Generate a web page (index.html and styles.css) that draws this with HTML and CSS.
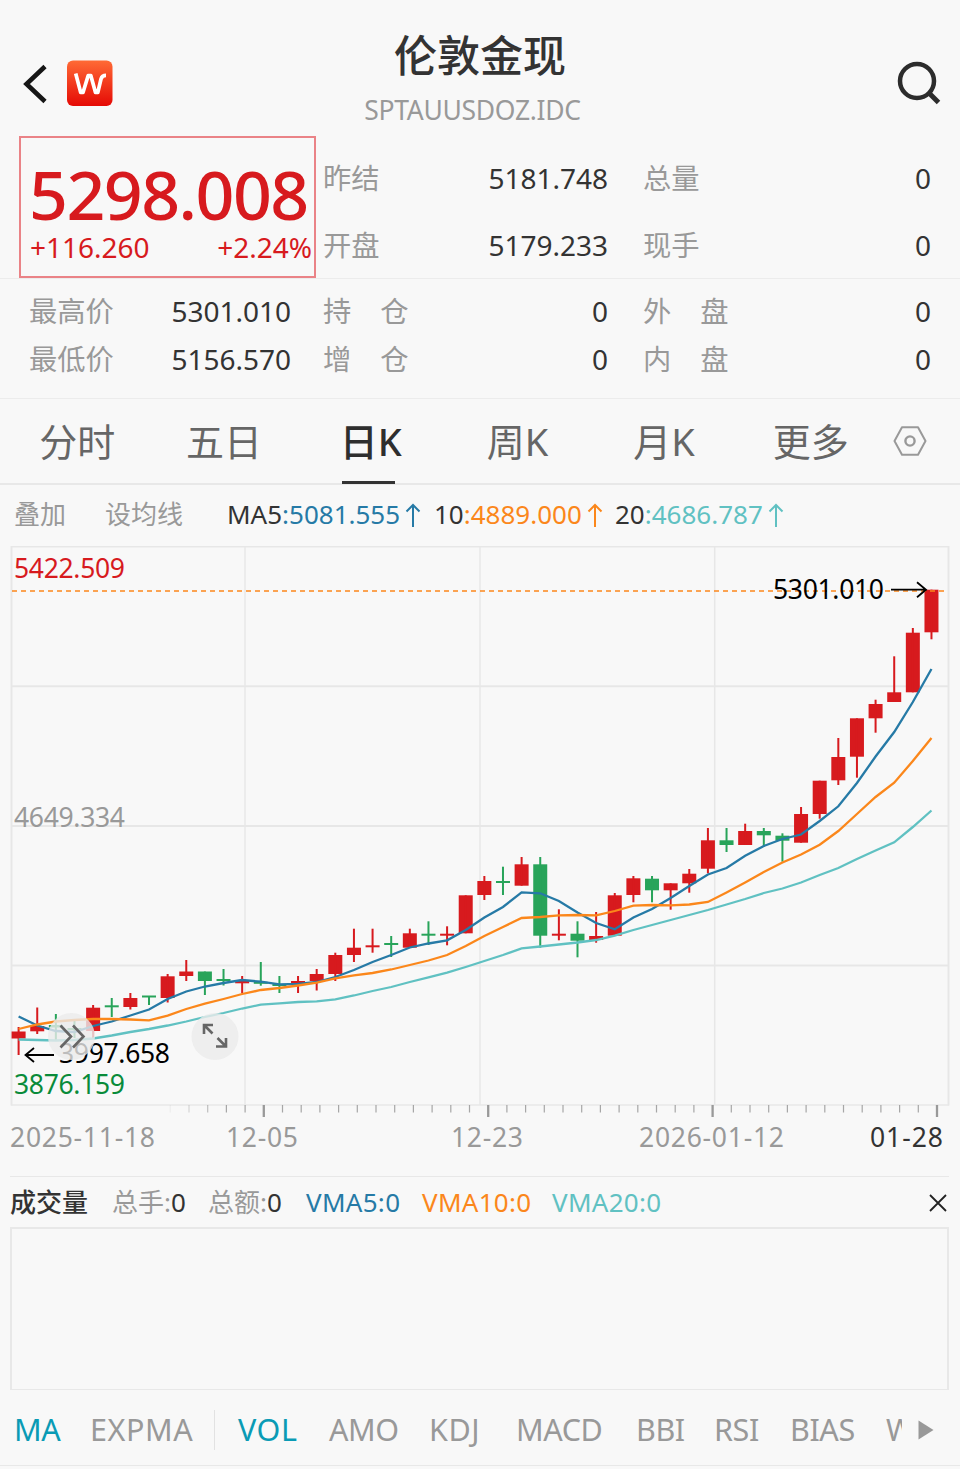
FILE: index.html
```html
<!DOCTYPE html>
<html lang="zh-CN">
<head>
    <meta charset="UTF-8">
    <meta name="viewport" content="width=device-width, initial-scale=1.0">
    <title>伦敦金现</title>
    <link rel="stylesheet" href="styles.css">
</head>
<body>
    <header class="header">
        <div class="header-left">
            <svg class="back" width="26" height="42" viewBox="0 0 26 42"><path d="M23 3.500 4.500 21 23 38.500" fill="none" stroke="#161616" stroke-width="4.600"/></svg>
            <svg class="logo" width="46" height="46" viewBox="0 0 46 46">
                <defs>
                    <linearGradient id="logo-bg" x1="0" y1="0" x2="0" y2="1">
                        <stop offset="0" stop-color="#ff6a35"/>
                        <stop offset="1" stop-color="#e50a05"/>
                    </linearGradient>
                </defs>
                <rect x="0" y="0.500" width="45.500" height="45.500" rx="6" fill="url(#logo-bg)"/>
                <path d="M8.700 13.500 13.700 32.500H16L21.200 15.500H23.800L28.500 32.500H30.800L34 19Q35 15.300 39 15.300" fill="none" stroke="#fff" stroke-width="3.700" stroke-linejoin="round"/>
            </svg>
        </div>
        <div class="header-title">
            <h1>伦敦金现</h1>
            <div class="code">SPTAUUSDOZ.IDC</div>
        </div>
        <svg class="search" width="48" height="48" viewBox="0 0 48 48"><g fill="none" stroke="#2c2c2c"><circle cx="22" cy="22" r="17" stroke-width="4.500"/><path d="M34 34 43.500 43.500" stroke-width="5"/></g></svg>
    </header>

    <section class="quote">
        <div class="price-box">
            <div class="price">5298.008</div>
            <div class="change"><span>+116.260</span><span>+2.24%</span></div>
        </div>
        <div class="quote-grid">
            <span class="label">昨结</span><span class="num">5181.748</span>
            <span class="label">总量</span><span class="num">0</span>
            <span class="label">开盘</span><span class="num">5179.233</span>
            <span class="label">现手</span><span class="num">0</span>
        </div>
    </section>

    <section class="details">
        <span class="label">最高价</span><span class="num">5301.010</span>
        <span class="label spaced">持仓</span><span class="num">0</span>
        <span class="label spaced">外盘</span><span class="num">0</span>
        <span class="label">最低价</span><span class="num">5156.570</span>
        <span class="label spaced">增仓</span><span class="num">0</span>
        <span class="label spaced">内盘</span><span class="num">0</span>
    </section>

    <nav class="tabs">
        <a class="tab">分时</a>
        <a class="tab">五日</a>
        <a class="tab active">日K</a>
        <a class="tab">周K</a>
        <a class="tab">月K</a>
        <a class="tab">更多</a>
        <svg class="settings" width="36" height="32" viewBox="0 0 36 32"><g fill="none" stroke="#999" stroke-width="2"><path d="M10 2.200H26L33.500 16 26 29.800H10L2.500 16Z" stroke-linejoin="round"/><circle cx="18" cy="16" r="4.600" stroke-width="2.400"/></g></svg>
    </nav>

    <div class="ma-bar">
        <span class="link overlay">叠加</span>
        <span class="link setting">设均线</span>
        <span class="ma ma5">MA5<b>:5081.555</b><svg width="16" height="24" viewBox="0 0 16 24"><path d="M8 24V2M1.500 8.500 8 2 14.500 8.500"/></svg></span>
        <span class="ma ma10">10<b>:4889.000</b><svg width="16" height="24" viewBox="0 0 16 24"><path d="M8 24V2M1.500 8.500 8 2 14.500 8.500"/></svg></span>
        <span class="ma ma20">20<b>:4686.787</b><svg width="16" height="24" viewBox="0 0 16 24"><path d="M8 24V2M1.500 8.500 8 2 14.500 8.500"/></svg></span>
    </div>

    <svg class="chart" width="960" height="630" viewBox="0 546 960 630">
        <g class="grid-lines">
            <path d="M11 686.200H949M11 826H949M11 965.500H949" stroke-width="2"/>
            <path d="M245 547V1105M480 547V1105M714.700 547V1105" stroke-width="1.500"/>
            <path d="M11.500 546V1105.500M948.500 546V1105.500" stroke-width="2"/>
            <path d="M11 546.700H949M11 1105H949" stroke-width="1.500"/>
        </g>
        <g id="ticks"></g>
        <g id="candles"></g>
        <g id="averages"></g>
        <path class="last-price" d="M12 591H944"/>
        <path class="arrow" d="M891 589.700H926M917 582.200 926 589.700 917 597.200"/>
        <path class="arrow" d="M54 1055H26M34 1048 25.500 1055 34 1062"/>
        <text x="14" y="577.500" textLength="111" class="up">5422.509</text>
        <text x="773" y="599" textLength="111">5301.010</text>
        <text x="14" y="826.500" textLength="111" class="muted">4649.334</text>
        <text x="59" y="1063" textLength="111">3997.658</text>
        <text x="14" y="1094" textLength="111" class="down">3876.159</text>
        <g class="round-button">
            <circle cx="71.500" cy="1036.500" r="23.500"/>
            <path d="M60.500 1025.500 71 1036.500 60.500 1047.500M73 1025.500 83.500 1036.500 73 1047.500"/>
        </g>
        <g class="round-button">
            <circle cx="215" cy="1036.500" r="23.500"/>
            <path d="M204 1034V1025H213M204.500 1025.500 212.500 1033.500M226 1038V1046.500H216M225.500 1046 217.500 1038"/>
        </g>
        <g class="muted">
            <text x="10" y="1146.500" textLength="145">2025-11-18</text>
            <text x="226" y="1146.500" textLength="72">12-05</text>
            <text x="451" y="1146.500" textLength="72">12-23</text>
            <text x="639" y="1146.500" textLength="145">2026-01-12</text>
        </g>
        <text x="870" y="1146.500" textLength="73" class="today">01-28</text>
    </svg>

    <section class="volume">
        <div class="volume-bar">
            <strong>成交量</strong>
            <span class="total">总手:<b>0</b></span>
            <span class="total">总额:<b>0</b></span>
            <span class="vma5">VMA5:0</span>
            <span class="vma10">VMA10:0</span>
            <span class="vma20">VMA20:0</span>
            <svg class="close" width="18" height="18" viewBox="0 0 18 18"><path d="M1 1 17 17M17 1 1 17" stroke="#222" stroke-width="1.800"/></svg>
        </div>
        <div class="volume-chart"></div>
    </section>

    <nav class="indicators">
        <a class="on">MA</a>
        <a class="wide">EXPMA</a>
        <i class="divider"></i>
        <a class="on wide">VOL</a>
        <a>AMO</a>
        <a class="wide">KDJ</a>
        <a>MACD</a>
        <a>BBI</a>
        <a>RSI</a>
        <a>BIAS</a>
        <a class="clipped">W</a>
        <svg width="16" height="22" viewBox="0 0 16 22"><path d="M0.500 1.500 15.500 11 0.500 20.500Z" fill="#999"/></svg>
    </nav>

    <script>
        const STEP = 18.63;
        const FIRST_X = 18.6;
        const x = i => FIRST_X + i * STEP;

        // [direction, body top, body bottom, high, low]
        const candles = [
            ['r', 1031.5, 1038.5, 1027, 1055], ['r', 1026, 1031.3, 1007.5, 1034],
            ['g', 1025, 1027.5, 1014, 1040], ['g', 1028, 1030, 1020, 1038],
            ['r', 1007.7, 1031, 1005, 1038], ['g', 1005.3, 1007.3, 998, 1017],
            ['r', 998, 1007, 993, 1009.5], ['g', 995.5, 997.5, 996, 1005],
            ['r', 976.3, 998, 974, 1002.5], ['r', 971.5, 976, 960, 981],
            ['g', 971.5, 981, 971.5, 995], ['g', 979, 981, 969, 985.5],
            ['r', 981, 983.3, 976, 993], ['g', 981.8, 983.8, 962, 985.7],
            ['g', 984, 986, 976, 993], ['r', 981, 983.7, 976, 993],
            ['r', 974, 981, 969, 990.5], ['r', 955, 974, 952.7, 981],
            ['r', 947.7, 955, 928.7, 962], ['r', 945.3, 947.3, 928.7, 952.7],
            ['g', 943, 945, 936, 957], ['r', 933.3, 947.7, 928.7, 947.7],
            ['g', 933.7, 935.7, 921.3, 945], ['r', 933.7, 935.7, 926.3, 945.3],
            ['r', 895.3, 933.3, 895.3, 933.3], ['r', 881, 895, 876, 900],
            ['g', 881, 883, 866.7, 895], ['r', 864.3, 885.7, 857, 885.7],
            ['g', 864.3, 935.7, 857, 947.7], ['r', 933.7, 935.7, 909.3, 940.3],
            ['g', 933.7, 940.7, 921.3, 957.3], ['r', 936, 940, 912, 942.7],
            ['r', 895.3, 935.7, 893, 935.7], ['r', 878.3, 895, 876, 902.3],
            ['g', 878.7, 890.3, 876, 902.3], ['r', 883.3, 890.3, 883.3, 909.7],
            ['r', 873.7, 883.3, 869, 892.7], ['r', 840.3, 868.7, 828, 873.3],
            ['g', 840.3, 845, 828, 852], ['r', 831, 845, 823.7, 845],
            ['g', 831, 835.3, 828, 846.7], ['g', 835.7, 840.7, 833.3, 861.7],
            ['r', 814, 842.7, 807, 842.7], ['r', 780.7, 814, 780.7, 818.7],
            ['r', 757, 780.3, 738, 785], ['r', 718.3, 756.7, 718.3, 777.7],
            ['r', 704, 718.3, 699.7, 732.7], ['r', 692.3, 702, 656.3, 702],
            ['r', 632.7, 692.3, 628, 692.3], ['r', 589.7, 632.3, 589.7, 639.3]
        ];

        const averages = {
            'line-20': [1039.5, 1040, 1040.5, 1040, 1038.5, 1035.5, 1032, 1029, 1025.5, 1021.5, 1017, 1013, 1008.5, 1004.7, 1003.3, 1002, 1001.3, 999.3, 995.5, 991, 987, 982, 977.3, 972.7, 967, 961, 955, 948.3, 946.5, 944.5, 942.5, 940, 935.7, 930, 925, 920, 915, 910, 904.5, 899, 893, 888.5, 882.5, 875, 868, 859, 850.5, 842.3, 827, 810.5],
            'line-5': [1016.5, 1025.5, 1031, 1032, 1026, 1021.5, 1015.5, 1009.5, 999, 991.5, 986.5, 983, 980, 981.7, 984.3, 984, 982, 977, 970, 962, 955, 947.5, 943.5, 940.3, 930, 917.5, 907, 892.3, 893.3, 901, 912.5, 923, 929.3, 917.5, 909, 898, 886, 874.5, 868, 855.7, 846, 839, 834.5, 821, 806.3, 783, 756.5, 732, 702, 669],
            'line-10': [1029, 1024.5, 1021.5, 1020, 1019, 1019, 1019.5, 1020.3, 1015.7, 1009, 1003.7, 999, 994, 990, 988, 985.5, 982.7, 978.3, 975.3, 973, 969.5, 965, 960.5, 955, 946, 936, 927, 918, 917, 915.3, 915, 915.3, 911, 905.7, 905, 905.3, 904.5, 902, 892.5, 882.5, 872, 862.5, 854.5, 844.7, 831, 814, 797, 782.7, 761, 738]
        };

        document.getElementById('candles').innerHTML = candles.map(([dir, top, bottom, high, low], i) => `
            <g class="${dir === 'r' ? 'candle-up' : 'candle-down'}">
                <rect x="${x(i) - 7}" y="${top}" width="14" height="${bottom - top}"/>
                <rect x="${x(i) - 1}" y="${high}" width="2" height="${low - high}"/>
            </g>`).join('');

        document.getElementById('averages').innerHTML = Object.entries(averages).map(([name, values]) =>
            `<polyline class="${name}" points="${values.map((y, i) => `${x(i)},${y}`).join(' ')}"/>`).join('');

        // every 12th tick is a labelled date; the first few fade in
        let ticks = '';
        for (let i = 0; i <= 41; i++) {
            const major = i % 12 === 5;
            const opacity = major ? 1 : Math.min(0.85, 0.1 + i * 0.25);
            ticks += `<path d="M${170.3 + i * 18.7} 1105V${major ? 1117 : 1112.5}" stroke-width="${major ? 2.3 : 1.2}" opacity="${opacity}"/>`;
        }
        document.getElementById('ticks').innerHTML = ticks;
    </script>
</body>
</html>
```
FILE: styles.css
```css
* {
    box-sizing: border-box;
}

body {
    width: 960px;
    height: 1469px;
    margin: 0;
    overflow: hidden;
    background-color: #f8f8f8;
    color: #333;
    font-family: "Noto Sans", "Noto Sans CJK SC", sans-serif;
    font-size: 28px;
    line-height: 1;
}

.header {
    display: grid;
    grid-template-columns: 300px 360px 300px;
    height: 136px;
}

.header-left {
    display: flex;
    align-items: flex-start;
    gap: 17px;
    padding: 60px 0 0 22px;
}

.back {
    margin-top: 3px;
    margin-right: 2px;
}

.header-title {
    text-align: center;
}

h1 {
    margin: 31px 0 0;
    font-size: 43px;
    font-weight: 500;
    line-height: 44px;
    font-family: "Noto Sans CJK SC", sans-serif;
}

.code {
    margin: 22px 15px 0 0;
    color: #999;
    font-size: 26.5px;
    letter-spacing: -0.3px;
}

.search {
    justify-self: end;
    margin: 59px 17px 0 0;
}

.quote {
    display: flex;
    height: 143px;
    padding-left: 19px;
    border-bottom: 1px solid #ececec;
}

.price-box {
    width: 297px;
    height: 142px;
    padding: 22px 2px 0 8px;
    border: 2px solid #ea8387;
    color: #d71a1e;
}

.price {
    font-size: 68px;
    font-weight: 500;
    line-height: 68px;
    letter-spacing: -1.5px;
}

.change {
    display: flex;
    justify-content: space-between;
    margin-top: 5px;
    padding-left: 1px;
}

.quote-grid {
    display: grid;
    grid-template-columns: 80px 205px 150px 173px;
    grid-template-rows: 67px 67px;
    align-items: center;
    padding: 9px 0 0 7px;
}

.label {
    color: #999;
    font-size: 28.3px;
}

.spaced {
    letter-spacing: 29px;
}

.num {
    margin-top: -2px;
    text-align: right;
}

.quote-grid .label:nth-child(4n+3) {
    padding-left: 35px;
}

.details {
    display: grid;
    grid-template-columns: 100px 162px 152px 165px 155px 168px;
    grid-template-rows: 48px 48px;
    align-items: center;
    height: 120px;
    padding: 8px 0 0 29px;
    border-bottom: 1px solid #ececec;
}

.details .num {
    margin-top: 0;
}

.details .label:nth-child(6n+3) {
    padding-left: 32px;
}

.details .label:nth-child(6n+5) {
    padding-left: 35px;
}

.tabs {
    display: flex;
    align-items: center;
    height: 86px;
    padding-left: 4px;
    border-bottom: 2px solid #e8e8e8;
}

.tab {
    display: flex;
    flex-direction: column;
    align-items: center;
    justify-content: center;
    width: 146.7px;
    height: 84px;
    padding-bottom: 1px;
    color: #666;
    font-size: 38px;
}

.active {
    color: #2e2e2e;
    font-weight: 500;
}

.active::after {
    content: "";
    width: 53px;
    height: 3px;
    margin: 21px 4px -24px 0;
    background-color: #333;
}

.settings {
    margin-left: 8px;
}

.ma-bar {
    display: flex;
    align-items: center;
    height: 61px;
    padding: 0 0 4px 14px;
    font-size: 26px;
}

.link {
    color: #999;
}

.overlay {
    width: 91px;
}

.setting {
    width: 122px;
}

.ma {
    display: flex;
    align-items: center;
}

.ma b {
    font-weight: 400;
}

.ma svg {
    margin: 2px 0 0 5px;
    fill: none;
    stroke-width: 2;
}

.ma5 {
    width: 207px;
}

.ma10 {
    width: 181px;
}

.ma5 b,
.vma5 {
    color: #267aa6;
}

.ma10 b,
.vma10 {
    color: #fb871b;
}

.ma20 b,
.vma20 {
    color: #60c1c2;
}

.ma5 svg {
    stroke: #267aa6;
}

.ma10 svg {
    stroke: #fb871b;
}

.ma20 svg {
    stroke: #60c1c2;
}

.chart {
    display: block;
    font-size: 26.5px;
}

.grid-lines path {
    fill: none;
    stroke: #e7e7e7;
}

#ticks path {
    stroke: #999;
}

.up,
.candle-up {
    fill: #d71a1e;
}

.down {
    fill: #098b3a;
}

.candle-down {
    fill: #28a45a;
}

.muted {
    fill: #999;
}

.today {
    fill: #333;
}

#averages polyline {
    fill: none;
    stroke-width: 2.3;
}

.line-5 {
    stroke: #267aa6;
}

.line-10 {
    stroke: #fb871b;
}

.line-20 {
    stroke: #60c1c2;
}

.last-price {
    stroke: #fb871b;
    stroke-width: 1.5;
    stroke-dasharray: 5 4;
}

.arrow {
    fill: none;
    stroke: #000;
    stroke-width: 1.8;
}

.round-button circle {
    fill: #ebebeb;
    opacity: 0.8;
}

.round-button path {
    fill: none;
    stroke: #666;
    stroke-width: 2.6;
}

.volume {
    margin: 0 11px 0 10px;
    border-top: 1px solid #e8e8e8;
}

.volume-bar {
    display: grid;
    grid-template-columns: 102px 96px 98px 116px 130px 377px 18px;
    align-items: center;
    height: 50px;
    font-size: 26px;
}

.volume-bar strong {
    font-weight: 500;
}

.total {
    color: #999;
}

.total b {
    color: #333;
    font-weight: 400;
}

.vma5,
.vma10,
.vma20 {
    letter-spacing: 0.3px;
}

.close {
    margin-top: 2px;
}

.volume-chart {
    width: 939px;
    height: 163px;
    border: 2px solid #e8e8e8;
    border-bottom-width: 1px;
}

.indicators {
    display: grid;
    grid-template-columns: 76px 124px 24px 91px 100px 87px 120px 78px 76px 96px 32px 16px;
    align-items: center;
    height: 76px;
    padding: 4px 0 0 14px;
    border-bottom: 1px solid #e8e8e8;
    color: #999;
    font-size: 30.5px;
    letter-spacing: -0.4px;
}

.wide {
    letter-spacing: 0.6px;
}

.on {
    color: #0a9bb5;
}

.divider {
    width: 1px;
    height: 40px;
    background-color: #e2e2e2;
}

.clipped {
    width: 16px;
    overflow: hidden;
}
```
